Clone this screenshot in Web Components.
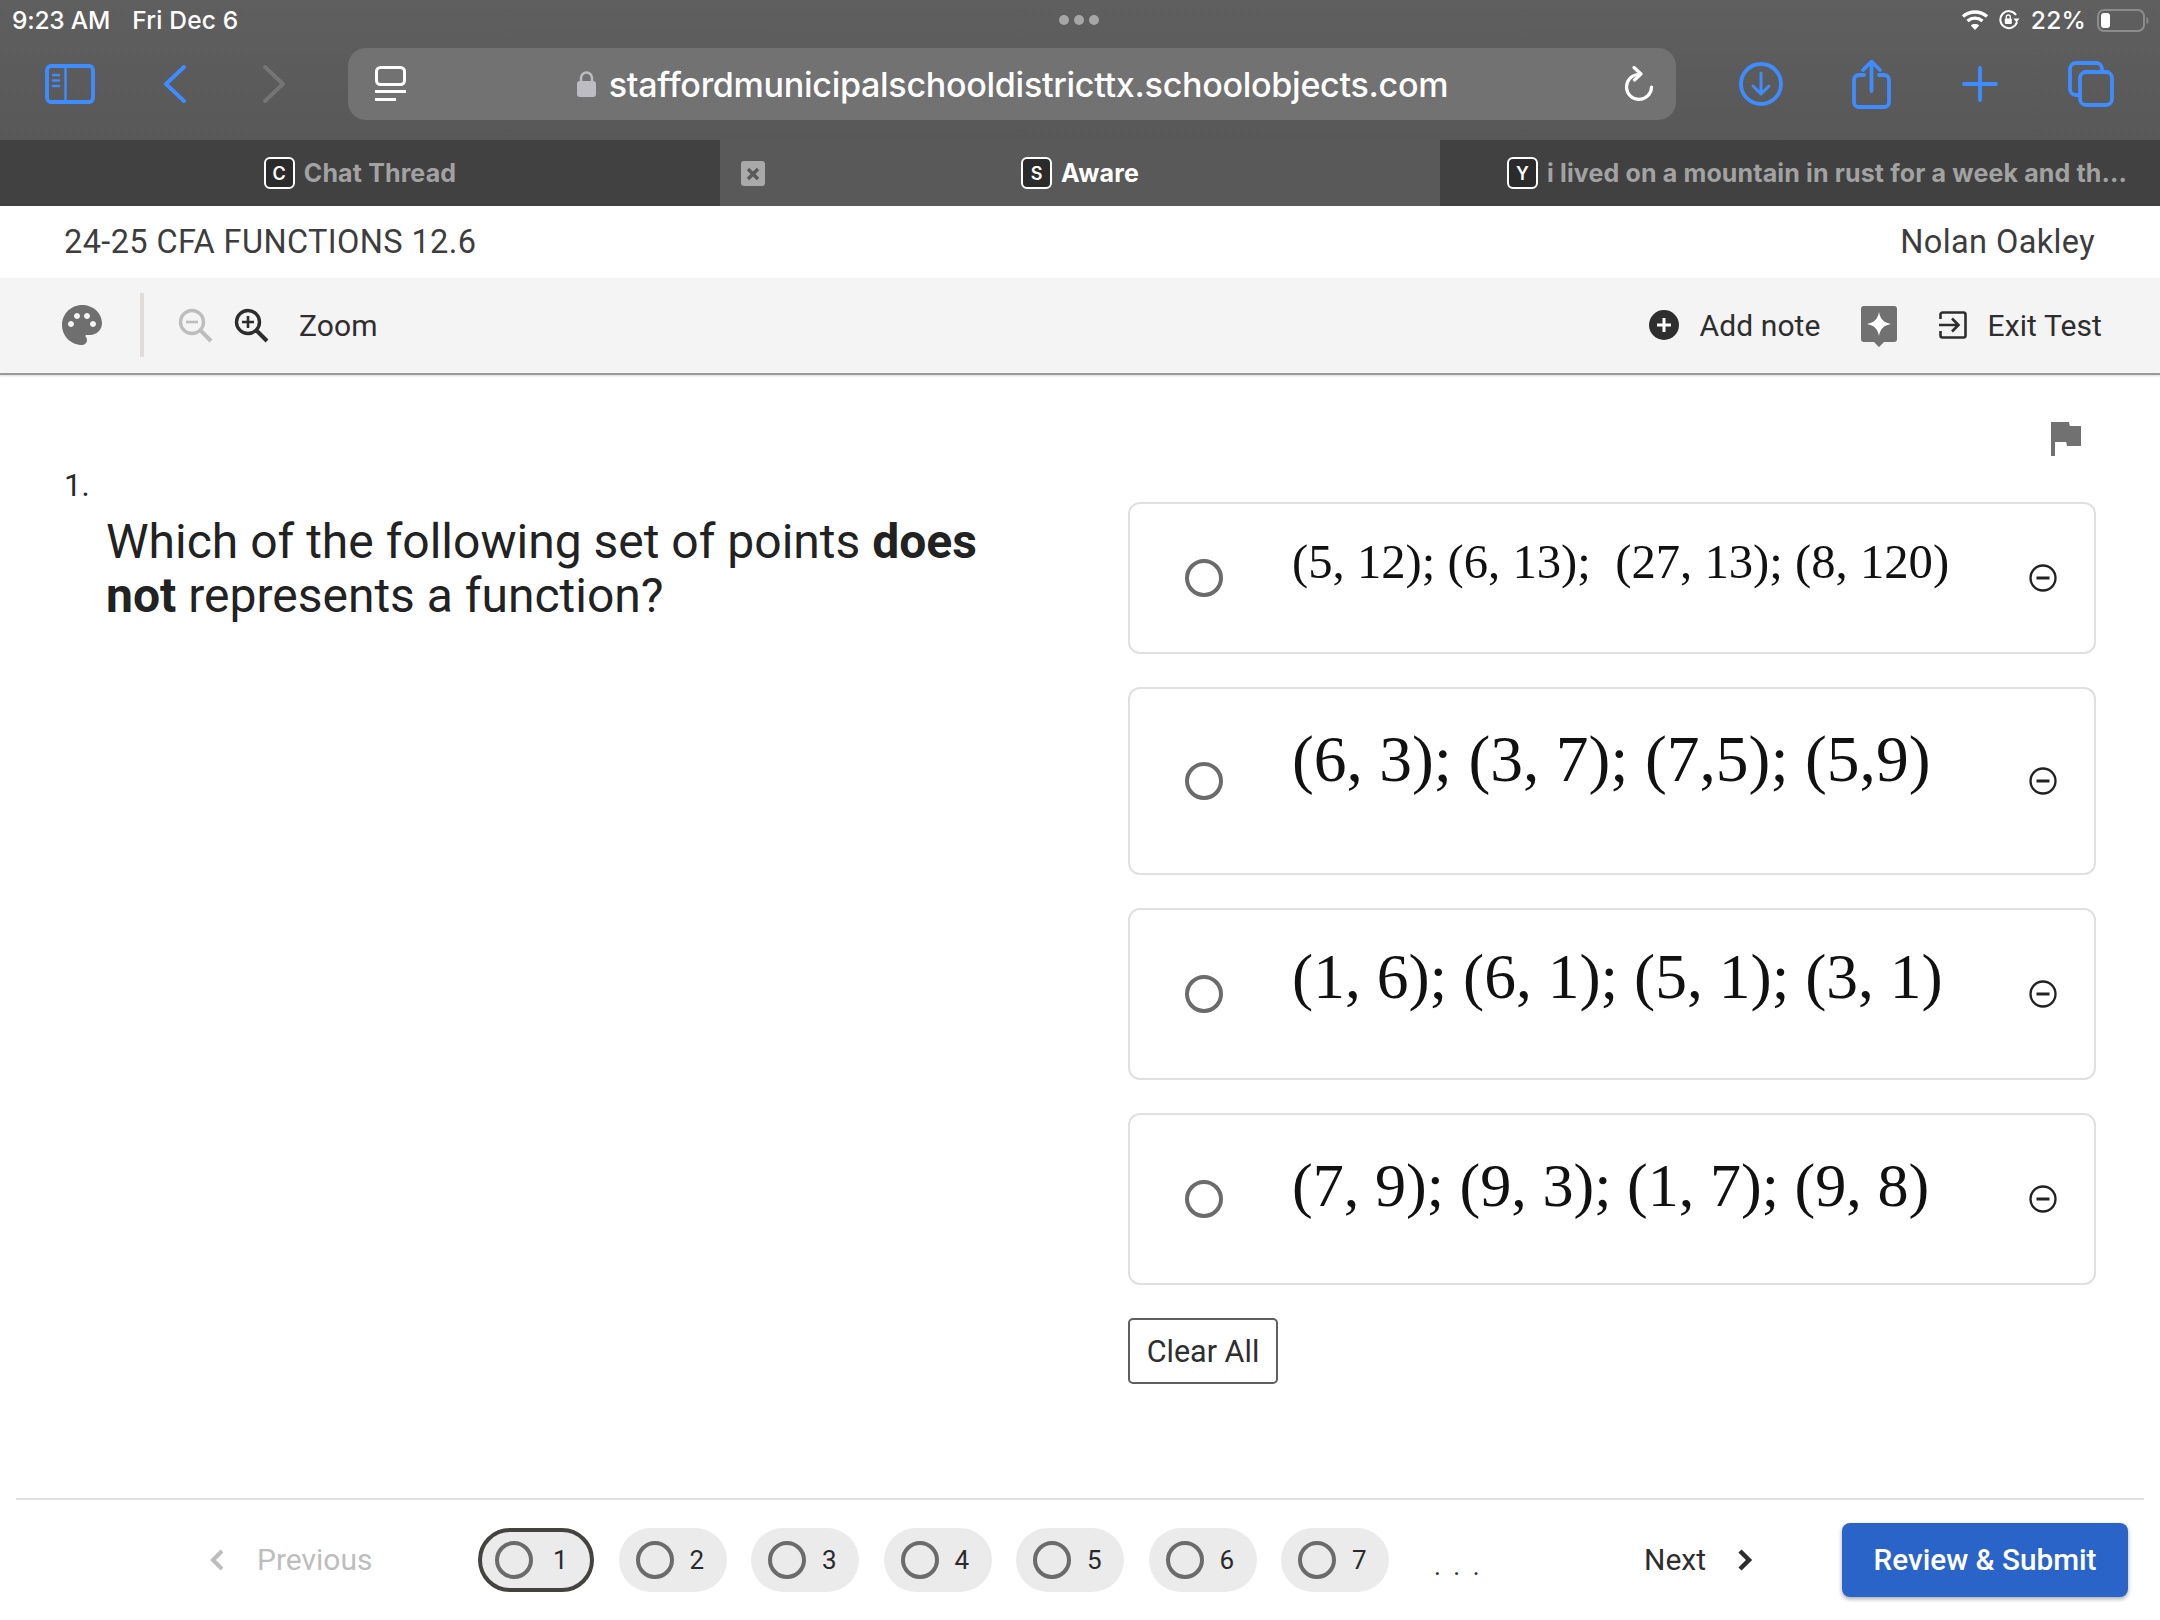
<!DOCTYPE html>
<html><head><meta charset="utf-8"><title>Test</title>
<style>
html,body{margin:0;padding:0;background:#fff}
body{width:2160px;height:1620px;overflow:hidden;font-family:Roboto,"Liberation Sans",sans-serif}
</style></head><body>
<test-page></test-page>
<script>
function def(name, html, init){
  customElements.define(name, class extends HTMLElement{
    connectedCallback(){
      if(this.shadowRoot) return;
      const r=this.attachShadow({mode:'open'});
      r.innerHTML=typeof html==='function'?html(this):html;
    }
  });
}
const BLUE='#3f8cff';
def('status-bar',`<style>
:host{display:flex;align-items:center;height:48px;padding:0 11px 0 12px;color:#fff;font:500 24.500px Inter,"Liberation Sans",sans-serif;position:relative;box-sizing:border-box;letter-spacing:-.2px}
.l{display:flex;gap:22px;margin-top:-8px}
.l span+span{letter-spacing:.2px}
.dots{position:absolute;left:1059px;top:15px;display:flex;gap:5px}
.dots i{width:10px;height:10px;border-radius:50%;background:#a6a6a6}
.r{margin-left:auto;display:flex;align-items:center;margin-top:-8px}
.r svg{display:block}
.pct{margin:0 11px 0 11px;letter-spacing:.2px}
</style>
<div class="l"><span>9:23 AM</span><span>Fri Dec 6</span></div>
<div class="dots"><i></i><i></i><i></i></div>
<div class="r">
<svg width="28" height="22" viewBox="0 0 28 22" fill="none" stroke="#fff" stroke-width="3.4" style="margin-right:9px"><path d="M2 7.5c7-6 17-6 24 0"/><path d="M6.5 12c4.500-3.800 10.500-3.800 15 0"/><path d="M14 21l-4.200-4.600c2.500-1.900 5.900-1.900 8.400 0z" fill="#fff" stroke="none"/></svg>
<svg width="22" height="20" viewBox="0 0 22 20" fill="none" stroke="#fff" stroke-width="2"><path d="M19 12a8.500 8.500 0 1 1-1-7"/><path d="M21.500 8.500L18.500 12.500 15.500 8.500z" fill="#fff" stroke="none"/><rect x="6.800" y="8.500" width="7" height="5.500" rx="1" fill="#fff" stroke="none"/><path d="M8.300 9V7a2 2 0 0 1 4 0v2" stroke-width="1.300"/></svg>
<span class="pct">22%</span>
<svg width="52" height="23" viewBox="0 0 52 23" fill="none"><rect x="1" y="1" width="46" height="21" rx="6" stroke="#8c8c8c" stroke-width="2"/><rect x="4" y="4" width="9" height="15" rx="3" fill="#fff"/><path d="M49.500 8c1.500.5 2 2 2 3.500s-.5 3-2 3.500z" fill="#8c8c8c"/></svg>
</div>`);

def('address-bar',`<style>
:host{display:flex;align-items:center;width:1328px;height:72px;box-sizing:border-box;background:#727272;border-radius:18px;padding:0 22px 0 27px;color:#fff;margin-left:63px}
.c{flex:1;display:flex;align-items:center;justify-content:center;padding-right:5px;gap:13px;font:500 34.100px Inter,"Liberation Sans",sans-serif;letter-spacing:-.3px}
svg{display:block;flex:none}
</style>
<svg width="31" height="36" viewBox="0 0 31 36" fill="none"><rect x="1.500" y="1.500" width="28" height="17" rx="4" stroke="#fff" stroke-width="3"/><path d="M0 25.500h31M0 33.500h21" stroke="#fff" stroke-width="3.200"/></svg>
<div class="c"><svg width="19" height="26" viewBox="0 0 19 26" fill="#bdbcc2"><rect y="10" width="19" height="16" rx="3"/><path d="M4 11V7a5.500 5.500 0 0 1 11 0v4" fill="none" stroke="#bdbcc2" stroke-width="2.500"/></svg><slot></slot></div>
<svg width="30" height="37" viewBox="0 0 30 37" fill="none" stroke="#fff" stroke-width="3.200" stroke-linecap="round" stroke-linejoin="round"><path d="M14 8.500A12.500 12.500 0 1 0 27.500 21"/><path d="M10 1.500l7 6.500-6.500 6"/></svg>`);

const ib=(w,h,vb,inner)=>`<svg width="${w}" height="${h}" viewBox="${vb}" fill="none" stroke="${BLUE}" stroke-width="3.800" stroke-linecap="round" stroke-linejoin="round" style="display:block;flex:none">${inner}</svg>`;
def('safari-toolbar',`<style>
:host{display:flex;align-items:center;height:92px;box-sizing:border-box;padding:0 0 20px 45px}
.m{display:block;flex:none}
</style>
${ib(50,40,'0 0 50 40',`<rect x="2" y="2" width="46" height="36" rx="4"/><path d="M20.500 2v36" stroke-width="2.500"/><path d="M8 11h6M8 16.500h6M8 22h6" stroke-width="2.500"/>`)}
<span class="m" style="margin-left:69px">${ib(22,38,'0 0 22 38',`<path d="M20 2L2 19l18 17"/>`)}</span>
<span class="m" style="margin-left:77px"><svg width="22" height="38" viewBox="0 0 22 38" fill="none" stroke="#757575" stroke-width="3.800" stroke-linecap="round" stroke-linejoin="round" style="display:block"><path d="M2 2l18 17L2 36"/></svg></span>
<address-bar>staffordmunicipalschooldistricttx.schoolobjects.com</address-bar>
<span class="m" style="margin-left:63px">${ib(44,44,'0 0 44 44',`<circle cx="22" cy="22" r="20"/><path d="M22 11v21M14 24l8 8 8-8" stroke-width="3"/>`)}</span>
<span class="m" style="margin-left:69px">${ib(39,49,'0 0 39 49',`<path d="M12 15H7a5 5 0 0 0-5 5v22a5 5 0 0 0 5 5h25a5 5 0 0 0 5-5V20a5 5 0 0 0-5-5h-5"/><path d="M19.500 31V2M11 10l8.500-8.500L28 10"/>`)}</span>
<span class="m" style="margin-left:71px">${ib(36,36,'0 0 36 36',`<path d="M18 2v32M2 18h32"/>`)}</span>
<span class="m" style="margin-left:70px">${ib(46,46,'0 0 46 46',`<path d="M12 34H8a6 6 0 0 1-6-6V8a6 6 0 0 1 6-6h20a6 6 0 0 1 6 6v3"/><rect x="12" y="11" width="32" height="33" rx="6"/>`)}</span>`);

def('browser-tab',t=>`<style>
:host{flex:none;width:720px;display:flex;align-items:center;justify-content:center;position:relative;height:66px;box-sizing:border-box;overflow:hidden;background:${t.hasAttribute('active')?'#595959':'#414141'};color:${t.hasAttribute('active')?'#fff':'#a2a2a2'};font:700 25px Inter,"Liberation Sans",sans-serif;letter-spacing:.14px;white-space:nowrap;${t.getAttribute('pl')?`justify-content:flex-start;padding-left:${t.getAttribute('pl')}px;`:''}}
.f{width:31px;height:32px;box-sizing:border-box;border:2.500px solid #fff;border-radius:6px;background:#2b2b2b;color:#fff;display:flex;align-items:center;justify-content:center;font:600 18px Inter,"Liberation Sans",sans-serif;margin-right:9px;flex:none}
.x{position:absolute;left:21px;top:21px;width:24px;height:25px;border-radius:3px;background:#a9a9a9;display:${t.hasAttribute('close')?'block':'none'}}
.x svg{display:block}
</style><span class="x"><svg width="24" height="25" viewBox="0 0 24 25" stroke="#595959" stroke-width="3.400"><path d="M7 8l10 10M17 8L7 18"/></svg></span><span class="f">${t.getAttribute('letter')}</span><slot></slot>`);

def('tab-bar',`<style>:host{display:flex;height:66px}</style><slot></slot>`);
def('browser-chrome',`<style>:host{display:block;background:linear-gradient(#5f5f5f,#585858 140px)}</style><slot></slot>`);

def('title-row',`<style>:host{display:flex;justify-content:space-between;align-items:center;height:72px;padding:0 65px 0 64px;box-sizing:border-box;font:400 32.500px Roboto,sans-serif;color:#3d3d3d;letter-spacing:.38px}</style><span><slot name="a"></slot></span><span><slot name="b"></slot></span>`);

def('test-toolbar',`<style>
:host{display:flex;align-items:center;height:97px;box-sizing:border-box;background:#f4f4f4;padding:0 58px 1px 62px;border-bottom:2px solid #9a9a9a;box-shadow:0 1px 2px rgba(0,0,0,.15);position:relative}
svg{display:block;flex:none}
.div{width:4px;height:64px;background:#dfdcda;margin:0 34px 0 38px}
.sp{flex:1}
.t{font:400 30px Roboto,sans-serif;color:#2e2e2e;letter-spacing:.1px}
</style>
<svg width="40" height="40" viewBox="2 2 20 20" fill="#6f6f6f"><path d="M12 2C6.490 2 2 6.490 2 12s4.490 10 10 10c1.380 0 2.500-1.120 2.500-2.500 0-.610-.230-1.200-.640-1.670-.080-.100-.130-.210-.130-.330 0-.280.220-.500.500-.500H16c3.310 0 6-2.690 6-6 0-4.960-4.490-9-10-9zm-5.500 11c-.830 0-1.500-.670-1.500-1.500S5.670 10 6.500 10s1.500.670 1.500 1.500S7.330 13 6.500 13zm3-4C8.670 9 8 8.330 8 7.500S8.670 6 9.500 6s1.500.670 1.500 1.500S10.330 9 9.500 9zm5 0c-.830 0-1.500-.670-1.500-1.500S13.670 6 14.500 6s1.500.670 1.500 1.500S15.330 9 14.500 9zm3 4c-.830 0-1.500-.670-1.500-1.500s.670-1.500 1.500-1.500 1.500.670 1.500 1.500-.670 1.500-1.500 1.500z"/></svg>
<span class="div"></span>
<svg width="35" height="35" viewBox="0 0 35 35" fill="none" stroke="#bdbdbd" stroke-width="3.400"><circle cx="14" cy="14" r="11.500"/><path d="M8 14h12" stroke-width="2.600"/><path d="M22.500 22.500L33 33" stroke-width="4"/></svg>
<svg style="margin-left:21px" width="35" height="35" viewBox="0 0 35 35" fill="none" stroke="#2d2d2d" stroke-width="3.400"><circle cx="14" cy="14" r="11.500"/><path d="M8 14h12M14 8v12" stroke-width="2.600"/><path d="M22.500 22.500L33 33" stroke-width="4"/></svg>
<span class="t" style="margin-left:30px">Zoom</span>
<span class="sp"></span>
<svg width="30" height="30" viewBox="0 0 30 30"><circle cx="15" cy="15" r="15" fill="#2e2e2e"/><path d="M15 8v14M8 15h14" stroke="#fff" stroke-width="3"/></svg>
<span class="t" style="margin-left:20px">Add note</span>
<svg style="margin-left:40px;margin-top:4px" width="36" height="42" viewBox="0 0 36 42"><path d="M3 0h30a3 3 0 0 1 3 3v30a3 3 0 0 1-3 3h-10l-5 5-5-5H3a3 3 0 0 1-3-3V3a3 3 0 0 1 3-3z" fill="#717171"/><path d="M18 6c1.200 7 4.500 10.500 12 12-7.500 1.500-10.800 5-12 12-1.200-7-4.500-10.500-12-12 7.500-1.500 10.800-5 12-12z" fill="#fff"/></svg>
<svg style="margin-left:42px" width="28" height="28" viewBox="0 0 28 28" fill="none" stroke="#2e2e2e" stroke-width="2.600"><path d="M1.500 8V3.500a2 2 0 0 1 2-2h21a2 2 0 0 1 2 2v21a2 2 0 0 1-2 2h-21a2 2 0 0 1-2-2V20"/><path d="M0 14h19M13 7.500l6.500 6.500-6.500 6.500"/></svg>
<span class="t" style="margin-left:21px">Exit Test</span>`);

def('ring-mark',t=>`<style>:host{display:block;flex:none;width:38px;height:38px;box-sizing:border-box;border:4px solid ${t.getAttribute('c')||'#6b6b6b'};border-radius:50%}</style>`);

def('answer-choice',t=>`<style>
:host{display:flex;align-items:center;box-sizing:border-box;height:${t.getAttribute('h')}px;border:2.500px solid #e0e0e0;border-radius:12px;padding:0 37px 0 55px}
.t{flex:1;margin-left:69px;font:400 ${t.getAttribute('fs')}px "Liberation Serif",serif;color:#111;white-space:pre;padding-bottom:${t.getAttribute('up')}px}
svg{display:block;flex:none}
</style>
<ring-mark></ring-mark>
<span class="t"><slot></slot></span>
<svg width="28" height="28" viewBox="0 0 28 28" fill="none" stroke="#222"><circle cx="14" cy="14" r="12.500" stroke-width="2.300"/><path d="M7.500 14h13" stroke-width="3"/></svg>`);

def('question-pane',`<style>
:host{display:block;padding-top:93px;font:400 31px Roboto,sans-serif;color:#2a2a2a}
.n{line-height:36px}
.q{margin:11px 140px 0 42px;font-size:48px;line-height:54px;color:#222}
</style><div class="n">1.</div><div class="q"><slot></slot></div>`);

def('answer-pane',`<style>
:host{display:flex;flex-direction:column;gap:33px;position:relative}
.flag{display:flex;justify-content:flex-end;padding:47px 15px 0 0;height:127px;box-sizing:border-box;margin-bottom:-33px}
svg{display:block}
button{align-self:flex-start;width:150px;height:66px;background:#fff;border:2px solid #5f5f5f;border-radius:5px;font:400 30.500px Roboto,sans-serif;color:#2e2e2e;padding:0}
</style>
<div class="flag"><svg width="30" height="34" viewBox="5 4 15 17" preserveAspectRatio="none" fill="#717171"><path d="M14.400 6L14 4H5v17h2v-7h5.600l.400 2h7V6z"/></svg></div>
<slot></slot>
<button>Clear All</button>`);

def('main-area',`<style>:host{display:grid;grid-template-columns:1064px 967.500px;padding:0 64.500px 0 64px;flex:1;min-height:0;align-items:start}</style><slot></slot>`);

def('nav-pill',t=>`<style>
:host{display:flex;align-items:center;box-sizing:border-box;width:${t.hasAttribute('current')?116:108}px;height:64px;border-radius:32px;background:#ebebeb;${t.hasAttribute('current')?'border:4px solid #454340;padding-left:13px;':'padding-left:17px;'}font:400 26px Roboto,sans-serif;color:#2a2a2a;flex:none}
span{margin-left:${t.hasAttribute('current')?20:16}px}
</style><ring-mark></ring-mark><span><slot></slot></span>`);

def('test-footer',`<style>
:host{display:flex;align-items:center;height:122px;box-sizing:border-box;margin:0 16px;padding-left:194px;border-top:2.500px solid #e0e0e0;font:400 30px Roboto,sans-serif;color:#2e2e2e;white-space:nowrap}
svg{display:block;flex:none}
.prev{color:#bdbdbd;margin-left:33px;width:113px;margin-top:-2px}
.pills{display:flex;gap:24.500px;margin-left:108px}
.dots{margin-left:45px;letter-spacing:12.500px;margin-top:12px;width:48px;font-size:26px}
.next{margin-left:162px;width:62px;margin-top:-2px}
.sub{margin-left:89px;width:286px;height:74px;border:0;border-radius:8px;background:#2a64c9;color:#fff;font:500 29.700px Roboto,sans-serif;box-shadow:0 2px 4px rgba(0,0,0,.35);padding:0 0 2px}
</style>
<svg width="14" height="22" viewBox="0 0 14 22" fill="none" stroke="#bdbdbd" stroke-width="4"><path d="M12 2L3 11l9 9"/></svg>
<span class="prev">Previous</span>
<div class="pills"><slot></slot></div>
<span class="dots">...</span>
<span class="next">Next</span>
<svg style="margin-left:32px" width="15" height="22" viewBox="0 0 15 22" fill="none" stroke="#2e2e2e" stroke-width="4.500"><path d="M2 2l9 9-9 9"/></svg>
<button class="sub">Review &amp; Submit</button>`);

def('test-page',`<style>:host{display:flex;flex-direction:column;width:2160px;height:1620px}</style>
<browser-chrome>
<status-bar></status-bar>
<safari-toolbar></safari-toolbar>
<tab-bar>
<browser-tab letter="C">Chat Thread</browser-tab>
<browser-tab letter="S" active close>Aware</browser-tab>
<browser-tab letter="Y" pl="67">i lived on a mountain in rust for a week and th...</browser-tab>
</tab-bar>
</browser-chrome>
<title-row><span slot="a">24-25 CFA FUNCTIONS 12.6</span><span slot="b">Nolan Oakley</span></title-row>
<test-toolbar></test-toolbar>
<main-area>
<question-pane>Which of the following set of points <b>does</b> <b>not</b> represents a function?</question-pane>
<answer-pane>
<answer-choice h="152" fs="48.700" up="32">(5, 12); (6, 13);  (27, 13); (8, 120)</answer-choice>
<answer-choice h="188" fs="65.500" up="44">(6, 3); (3, 7); (7,5); (5,9)</answer-choice>
<answer-choice h="172" fs="63.500" up="35">(1, 6); (6, 1); (5, 1); (3, 1)</answer-choice>
<answer-choice h="172" fs="62.200" up="27">(7, 9); (9, 3); (1, 7); (9, 8)</answer-choice>
</answer-pane>
</main-area>
<test-footer>
<nav-pill current>1</nav-pill><nav-pill>2</nav-pill><nav-pill>3</nav-pill><nav-pill>4</nav-pill><nav-pill>5</nav-pill><nav-pill>6</nav-pill><nav-pill>7</nav-pill>
</test-footer>`);
</script>
</body></html>
